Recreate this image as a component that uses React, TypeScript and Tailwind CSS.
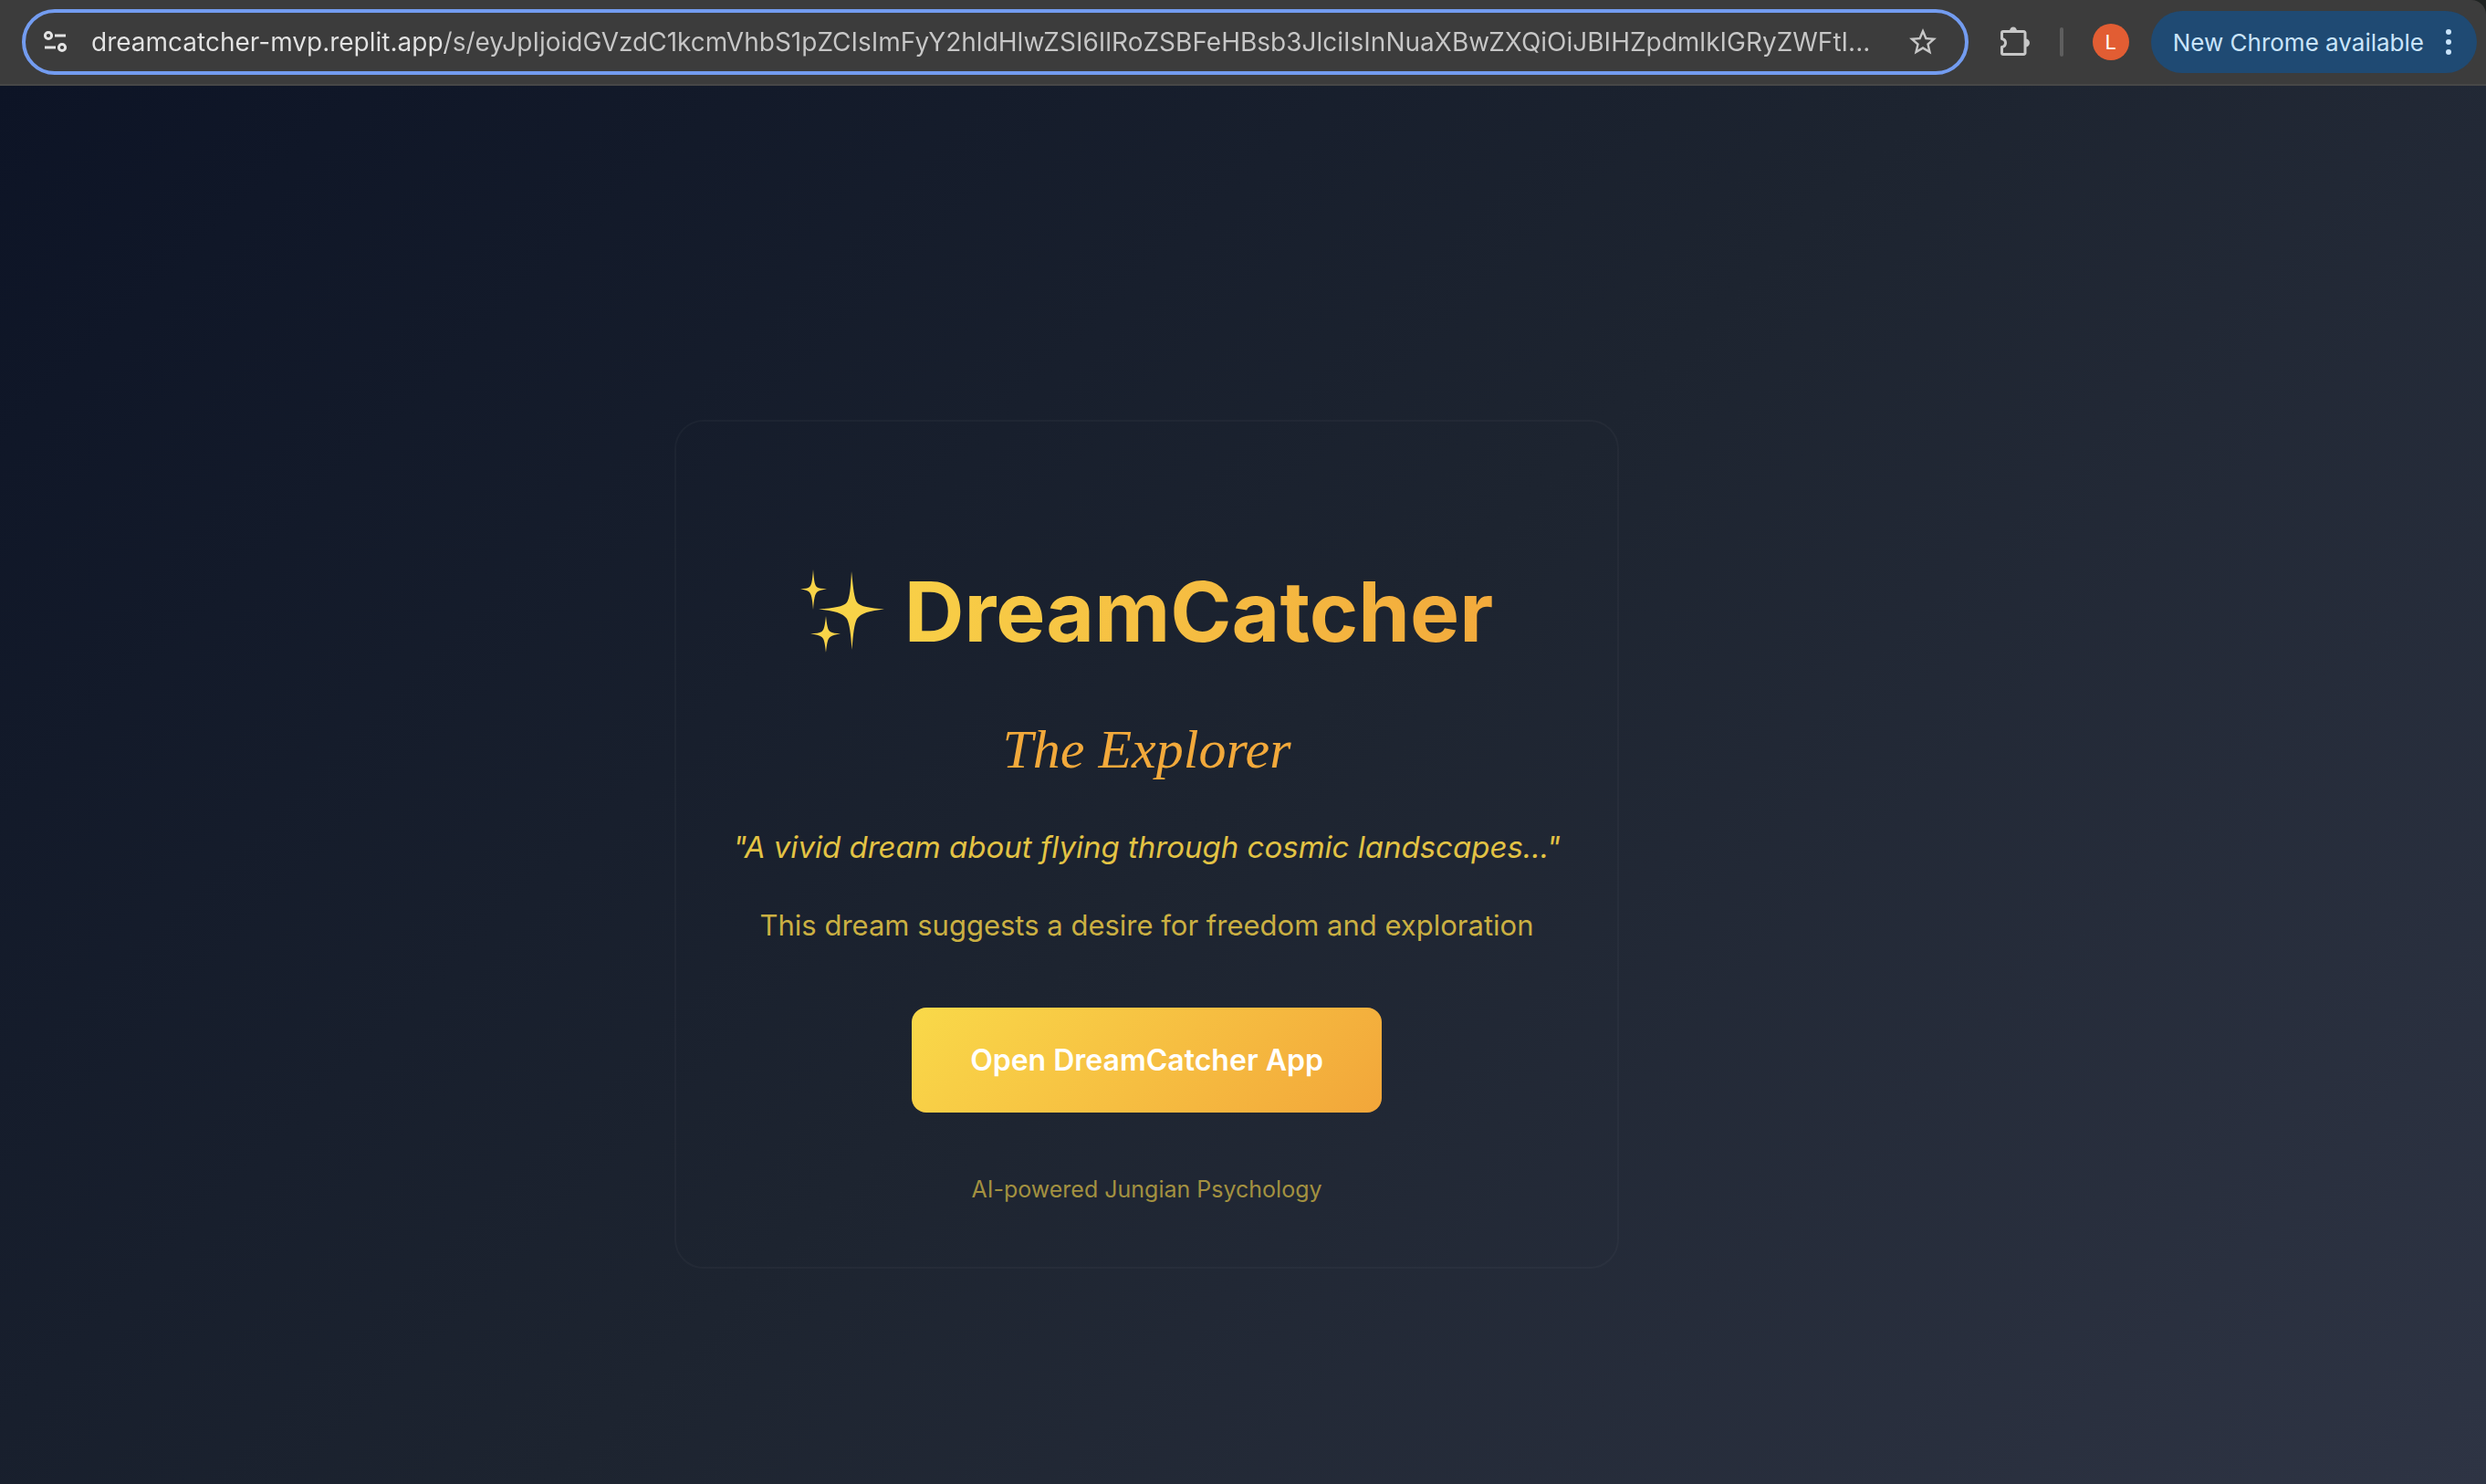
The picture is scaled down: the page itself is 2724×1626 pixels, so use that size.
const sans = "font-['Inter','Liberation_Sans',sans-serif]";

const url =
  'dreamcatcher-mvp.replit.app/s/eyJpIjoidGVzdC1kcmVhbS1pZCIsImFyY2hldHlwZSI6IlRoZSBFeHBsb3JlciIsInNuaXBwZXQiOiJBIHZpdmlkIGRyZWFtI...';

function TuneIcon() {
  return (
    <svg viewBox="0 0 26 26" className="h-[26px] w-[26px] shrink-0" fill="none" stroke="#e3e3e3" strokeWidth="3" aria-hidden="true">
      <circle cx="5" cy="6" r="3.6" />
      <path d="M12 6h12M1 19h12" />
      <circle cx="20" cy="19" r="3.6" />
    </svg>
  );
}

function StarIcon() {
  return (
    <svg viewBox="0 0 24 24" className="h-9 w-9" fill="#c7c7c7" aria-hidden="true">
      <path d="M22 9.24l-7.19-.62L12 2 9.19 8.63 2 9.24l5.46 4.73L5.82 21 12 17.27 18.18 21l-1.63-7.03L22 9.24zM12 15.4l-3.76 2.27 1-4.28-3.32-2.88 4.38-.38L12 6.1l1.71 4.04 4.38.38-3.32 2.88 1 4.28L12 15.4z" />
    </svg>
  );
}

function PuzzleIcon() {
  return (
    <svg viewBox="0 0 34 34" className="h-[34px] w-[34px]" aria-hidden="true">
      <path d="M4 5.5h22.500a1.500 1.500 0 0 1 1.500 1.500v22a1.500 1.500 0 0 1-1.500 1.500H4A1.500 1.500 0 0 1 2.500 29v-6.500c2.500-.5 4-2.300 4-4.500s-1.500-4-4-4.500V7A1.500 1.500 0 0 1 4 5.500z" fill="none" stroke="#c7c7c7" strokeWidth="3" strokeLinejoin="round" />
      <path d="M11 5a4 4.500 0 0 1 8 0zM28.500 13.500a4.500 4.500 0 0 1 0 9z" fill="#c7c7c7" />
    </svg>
  );
}

function Sparkles() {
  return (
    <svg viewBox="0 0 94 92" className="h-[92px] w-[94px] shrink-0" aria-hidden="true">
      <defs>
        <linearGradient id="spark" x1="0" y1="0" x2="1" y2="1">
          <stop offset="0" stopColor="#f9d949" />
          <stop offset="1" stopColor="#f8ce47" />
        </linearGradient>
      </defs>
      <g fill="url(#spark)">
        <path d="M14 0C15 14 16 18 18.500 19.500C20 20.500 24 21 29 21.500C24 22 20 23 18.500 24.500C16 27 15 31 14 44C13 31 12 27 9.500 24.500C8 23 5 22 0 21.500C5 21 8 20.500 9.500 19.500C12 18 13 14 14 0Z" />
        <path d="M56 2C58 22 59 31 62 36C66 41 76 42 92 43.500C76 45 66 48 62 54C59 60 58 69 56.500 88C55 69 54 60 51 54C47 48 37 45 20 43.500C37 42 47 41 51 36C54 31 55 22 56 2Z" />
        <path d="M28 51C29 61 30 66 32.500 68C35 69.500 39 70 44 70.500C39 71 35 72 32.500 74C30 76 29 81 28 91C27 81 26 76 23.500 74C21 72 17 71 11 70.500C17 70 21 69.500 23.500 68C26 66 27 61 28 51Z" />
      </g>
    </svg>
  );
}

function BrowserBar() {
  return (
    <header className="bg-[#1f2322]">
      <div className="flex h-[94px] items-center rounded-tr-2xl border-b-2 border-[#474747] bg-[#3c3c3c] pr-[10px] pl-6">
        <div className="flex h-[72px] min-w-0 flex-1 items-center rounded-full border-4 border-[#739cf0] pr-7 pl-5">
          <TuneIcon />
          <input
            type="text"
            aria-label="Address"
            defaultValue={url}
            className="mr-8 ml-[26px] min-w-0 flex-1 bg-linear-to-r from-[#e3e3e3] from-[388px] to-[#c7c7c7] to-[388px] bg-clip-text text-[28px] text-transparent outline-none"
          />
          <button type="button" aria-label="Bookmark this page">
            <StarIcon />
          </button>
        </div>
        <button type="button" aria-label="Extensions" className="ml-[34px]">
          <PuzzleIcon />
        </button>
        <div className="ml-8 h-8 w-1 rounded-full bg-[#5e5e5e]" />
        <button type="button" aria-label="Profile" className="ml-8 h-10 w-10 rounded-full bg-[#e25d33] text-[22px] text-white">
          L
        </button>
        <button type="button" className="ml-6 flex h-[68px] items-center gap-6 rounded-full bg-[#1f4a73] pr-7 pl-6 text-[26px] text-[#c9e4fb]">
          New Chrome available
          <svg viewBox="0 0 6 28" className="h-7 w-[6px]" fill="#c9e4fb" aria-hidden="true">
            <circle cx="3" cy="3" r="3" />
            <circle cx="3" cy="14" r="3" />
            <circle cx="3" cy="25" r="3" />
          </svg>
        </button>
      </div>
    </header>
  );
}

export default function App() {
  return (
    <div className={`flex min-h-screen flex-col ${sans}`}>
      <BrowserBar />
      <main className="flex flex-1 items-start justify-center bg-linear-135 from-[#0d1426] via-[#1d2430] to-[#2e3444] pt-[366px] pr-[211px]">
        <section className="flex flex-col items-center rounded-[32px] border-2 border-white/3 px-[62px] pt-40 pb-16 text-center">
          <h1 className="flex items-center gap-5 text-[91px] leading-[96px] font-bold">
            <Sparkles />
            <span className="bg-linear-to-r from-[#f8cf47] to-[#f2aa3c] bg-clip-text text-transparent">DreamCatcher</span>
          </h1>
          <h2 className="mt-16 font-['Apple_Chancery','Liberation_Serif',cursive] text-[60px] leading-[78px] text-[#f2a93b] italic">The Explorer</h2>
          <p className="mt-10 text-[33px] leading-[56px] text-[#e3c344] italic">"A vivid dream about flying through cosmic landscapes..."</p>
          <p className="mt-8 text-[31px] leading-[52px] text-[#cbb042]">This dream suggests a desire for freedom and exploration</p>
          <button type="button" className="mt-16 rounded-2xl bg-linear-135 from-[#f9d949] to-[#f2a63a] px-16 py-8 text-[32px] leading-[51px] font-semibold text-white">
            Open DreamCatcher App
          </button>
          <p className="mt-16 text-[25px] leading-[41px] text-[#a39140]">AI-powered Jungian Psychology</p>
        </section>
      </main>
    </div>
  );
}
